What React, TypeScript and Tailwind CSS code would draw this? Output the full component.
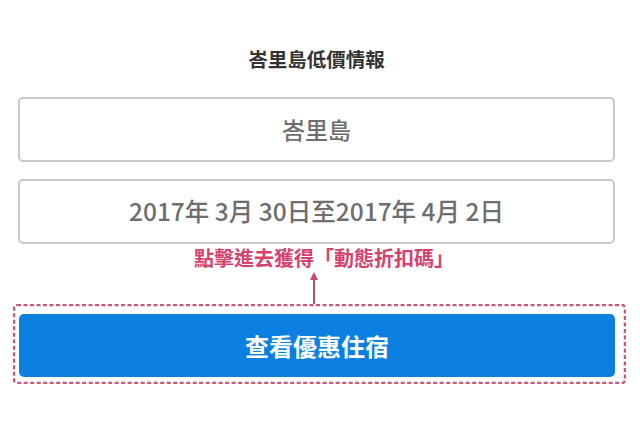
import React from "react";

export default function App() {
  return (
    <div
      className="w-[640px] h-[423px] bg-white overflow-hidden"
      style={{ fontFamily: '"Noto Sans CJK TC", "Noto Sans", sans-serif' }}
    >
      <div className="pt-[48px] text-center text-[19.5px] leading-[22px] font-bold text-[#333333] pl-[18px] pr-[25px]">
        峇里島低價情報
      </div>
      <div className="mt-[27px] ml-[18px] mr-[25px] h-[65px] border-2 border-[#c9c9c9] rounded-[5px] flex items-center justify-center text-[23px] text-[#6e6e6e] font-medium">
        峇里島
      </div>
      <div className="mt-[17px] ml-[18px] mr-[25px] h-[65px] border-2 border-[#c9c9c9] rounded-[5px] flex items-center justify-center text-[24.5px] text-[#6e6e6e] font-medium">
        2017年 3月 30日至2017年 4月 2日
      </div>
      <div className="mt-[4px] text-center text-[20px] leading-[20px] font-bold text-[#d8406e] pl-[8px]">
        點擊進去獲得「動態折扣碼」
      </div>
      <div className="flex justify-center h-[34px] mt-[2px]">
        <svg width="12" height="34" viewBox="0 0 12 34" className="ml-[-12px]">
          <path d="M6 2 L2 10 L10 10 Z" fill="#c8476b" />
          <line x1="6" y1="8" x2="6" y2="34" stroke="#c8476b" strokeWidth="2" />
        </svg>
      </div>
      <div className="relative ml-[13px] mr-[14px] h-[80px] pl-[6px] pr-[11px] pt-[10px] pb-[7px]">
        <svg className="absolute inset-0 pointer-events-none" width="613" height="80">
          <rect
            x="1"
            y="1"
            width="611"
            height="78"
            rx="3"
            fill="none"
            stroke="#d0557a"
            strokeWidth="2.5"
            strokeDasharray="4 2.5"
          />
        </svg>
        <div className="h-[63px] bg-[#0c80e0] rounded-[5px] flex items-center justify-center text-white text-[24px] font-bold">
          查看優惠住宿
        </div>
      </div>
    </div>
  );
}
